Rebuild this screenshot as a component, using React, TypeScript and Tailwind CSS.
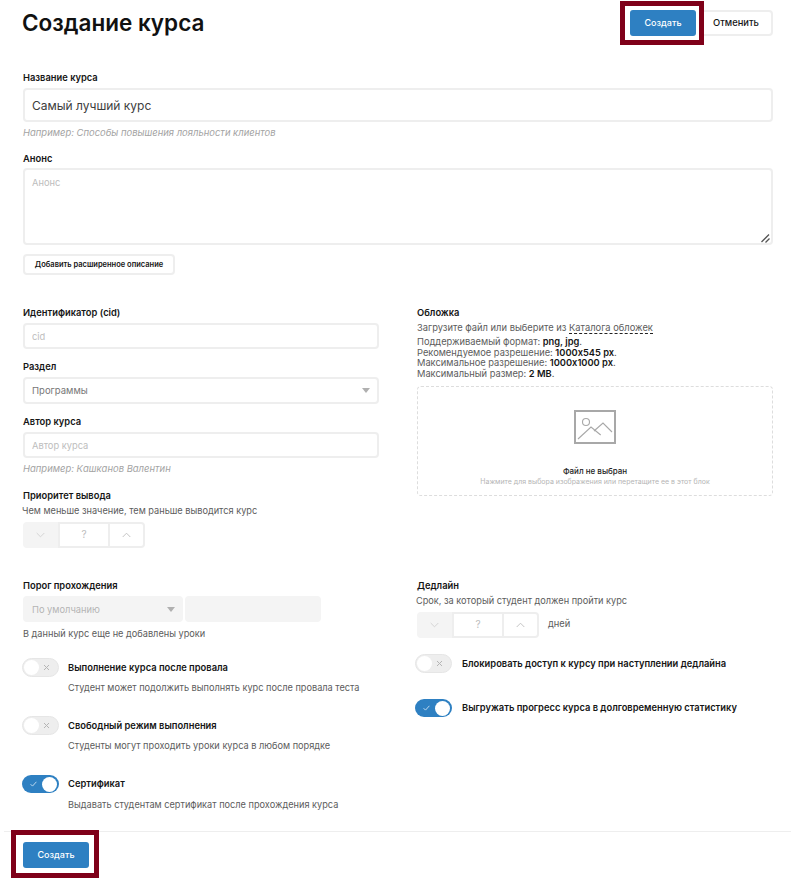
import React from 'react'

const fontStyle = "font-['Inter','Liberation_Sans',sans-serif]"

const Label = ({ children, className = '' }: { children: React.ReactNode; className?: string }) => (
    <p className={`translate-y-[1px] text-[9.35px] leading-[12px] font-semibold text-[#151515] ${className}`}>{children}</p>
)

const Hint = ({ children, className = '' }: { children: React.ReactNode; className?: string }) => (
    <p className={`translate-y-[1px] text-[9.45px] leading-[12px] italic text-[#a3a3a3] ${className}`}>{children}</p>
)

const Desc = ({ children, className = '' }: { children: React.ReactNode; className?: string }) => (
    <p className={`translate-y-[1px] text-[9.2px] leading-[12px] text-[#5c5c5c] ${className}`}>{children}</p>
)

const TextInput = ({ placeholder, className = '' }: { placeholder: string; className?: string }) => (
    <input
        type="text"
        placeholder={placeholder}
        className={`block w-full h-[26px] px-[7px] border-2 border-[#eeeeee] rounded-[4px] text-[9.3px] placeholder:text-[#bdbdbd] outline-none ${className}`}
    />
)

const Caret = () => (
    <span className="w-0 h-0 border-l-[4.5px] border-r-[4.5px] border-t-[5px] border-l-transparent border-r-transparent border-t-[#b0b0b0]" />
)

const Stepper = () => (
    <div className="flex w-[122px] h-[26px]">
        <div className="w-[35px] bg-[#f4f4f4] rounded-l-[4px] flex items-center justify-center">
            <svg width="9" height="6" viewBox="0 0 9 6" fill="none" stroke="#d4d4d4" strokeWidth="1"><path d="M.7 1l3.8 3.8L8.3 1" /></svg>
        </div>
        <div className="w-[52px] border-2 border-[#eeeeee] flex items-center justify-center text-[10px] text-[#bdbdbd] pb-[2px]">?</div>
        <div className="w-[35px] border-y-2 border-r-2 border-[#eeeeee] rounded-r-[4px] flex items-center justify-center">
            <svg width="9" height="6" viewBox="0 0 9 6" fill="none" stroke="#c4c4c4" strokeWidth="1"><path d="M.7 5l3.8-3.8L8.3 5" /></svg>
        </div>
    </div>
)

const Toggle = ({ on = false }: { on?: boolean }) =>
    on ? (
        <div className="w-[37px] h-[18px] shrink-0 rounded-full bg-[#2e80c2] flex items-center justify-between pl-[8px] pr-[2px]">
            <svg width="7" height="6" viewBox="0 0 7 6" fill="none" stroke="#bcd8ee" strokeWidth="1"><path d="M.6 3.2l1.9 1.9L6.4.8" /></svg>
            <span className="w-[15px] h-[15px] rounded-full bg-white" />
        </div>
    ) : (
        <div className="w-[37px] h-[19px] shrink-0 rounded-full bg-[#eeeeee] border border-[#e6e6e6] flex items-center justify-between pl-[1px] pr-[8px]">
            <span className="w-[15px] h-[15px] rounded-full bg-white" />
            <svg width="7" height="7" viewBox="0 0 7 7" fill="none" stroke="#b5b5b5" strokeWidth="1"><path d="M1 1l5 5M6 1L1 6" /></svg>
        </div>
    )

const ToggleRow = ({ on, title, text, className = '' }: { on?: boolean; title: string; text?: string; className?: string }) => (
    <div className={`flex -ml-[1px] ${className}`}>
        <Toggle on={on} />
        <div className={on ? 'pt-[2px]' : 'pt-[3px]'}>
            <Label>{title}</Label>
            {text && <Desc className={on ? 'mt-[9px]' : 'mt-[8px]'}>{text}</Desc>}
        </div>
    </div>
)

const CreateButton = () => (
    <button className="block w-[66px] h-[26px] rounded-[3px] bg-[#2e80c2] text-white text-[9px] font-medium">Создать</button>
)

const App = () => {
    return (
        <div className={`relative w-[791px] h-[878px] overflow-hidden bg-white text-[#151515] ${fontStyle}`}>
            <div className="pl-[23px] pr-[18px]">
                <div className="flex items-start justify-between pt-[10px] h-[71px]">
                    <h1 className="-ml-[1px] -mt-[2px] text-[22.5px] leading-[30px] font-semibold text-[#111111]">Создание курса</h1>
                    <div className="flex gap-[3px]">
                        <CreateButton />
                        <button className="w-[74px] h-[26px] rounded-[4px] border-2 border-[#eeeeee] text-[9.4px] font-medium">Отменить</button>
                    </div>
                </div>

                <Label>Название курса</Label>
                <input
                    type="text"
                    defaultValue="Самый лучший курс"
                    className="block w-full h-[34px] mt-[5px] px-[7px] border-2 border-[#eeeeee] rounded-[4px] text-[12px] text-[#3d3d3d] outline-none"
                />
                <Hint className="mt-[4px]">Например: Способы повышения лояльности клиентов</Hint>
                <Label className="mt-[14px]">Анонс</Label>
                <div className="relative mt-[4px]">
                    <textarea
                        placeholder="Анонс"
                        className="block w-full h-[77px] px-[7px] py-[6px] border-2 border-[#eeeeee] rounded-[4px] text-[9.3px] placeholder:text-[#bdbdbd] outline-none resize-none"
                    />
                    <svg className="absolute right-[3px] bottom-[2px]" width="9" height="9" viewBox="0 0 9 9" fill="none" stroke="#555555" strokeWidth="1.3">
                        <path d="M.5 8L8 .5M4.5 8.5L8.5 4.5" />
                    </svg>
                </div>
                <button className="block w-[152px] h-[21px] mt-[9px] border-2 border-[#eeeeee] rounded-[4px] text-[7.5px] font-semibold">Добавить расширенное описание</button>

                <div className="grid grid-cols-[356px_356px] gap-x-[38px] mt-[31px]">
                    <div>
                        <Label>Идентификатор (cid)</Label>
                        <TextInput placeholder="cid" className="mt-[5px]" />
                        <Label className="mt-[11px]">Раздел</Label>
                        <div className="flex items-center justify-between h-[27px] mt-[5px] px-[7px] border-2 border-[#eeeeee] rounded-[4px] text-[9.5px] text-[#777777]">
                            <span className="pt-[1px]">Программы</span>
                            <Caret />
                        </div>
                        <Label className="mt-[11px]">Автор курса</Label>
                        <TextInput placeholder="Автор курса" className="mt-[5px]" />
                        <Hint className="mt-[4px]">Например: Кашканов Валентин</Hint>
                        <Label className="mt-[15px]">Приоритет вывода</Label>
                        <Desc className="mt-[3px] -ml-[1px]">Чем меньше значение, тем раньше выводится курс</Desc>
                        <div className="mt-[6px]"><Stepper /></div>
                    </div>

                    <div>
                        <Label>Обложка</Label>
                        <p className="mt-[3px] translate-y-[1px] text-[9.35px] leading-[12px] text-[#5c5c5c]">
                            Загрузите файл или выберите из{' '}
                            <span className="border-b border-dashed border-[#222222]">Каталога обложек</span>
                        </p>
                        <div className="mt-[4px] text-[9.3px] leading-[10.7px] text-[#5c5c5c]">
                            <p>Поддерживаемый формат: <b className="font-semibold text-[#151515]">png, jpg</b>.</p>
                            <p>Рекомендуемое разрешение: <b className="font-semibold text-[#151515]">1000x545 px</b>.</p>
                            <p>Максимальное разрешение: <b className="font-semibold text-[#151515]">1000x1000 px</b>.</p>
                            <p>Максимальный размер: <b className="font-semibold text-[#151515]">2 MB</b>.</p>
                        </div>
                        <div className="flex flex-col items-center h-[110px] mt-[6px] pt-[23px] border border-dashed border-[#dddddd] rounded-[4px]">
                            <svg width="42" height="34" viewBox="0 0 42 34" fill="none" stroke="#a8a8a8" strokeWidth="1.1">
                                <rect x="1" y="1" width="40" height="32" strokeWidth="2" />
                                <circle cx="12" cy="12" r="3.5" />
                                <path d="M4 29L17 17l9.7 8M20 21l9-8 9 9" />
                            </svg>
                            <p className="mt-[22px] text-[8px] leading-[10px] font-medium text-[#222222]">Файл не выбран</p>
                            <p className="mt-[1px] text-[7px] leading-[10px] text-[#b5b5b5]">Нажмите для выбора изображения или перетащите ее в этот блок</p>
                        </div>
                    </div>
                </div>

                <div className="grid grid-cols-[356px_356px] gap-x-[38px] mt-[31px]">
                    <div>
                        <Label>Порог прохождения</Label>
                        <div className="flex gap-[2px] mt-[5px]">
                            <div className="flex items-center justify-between w-[160px] h-[26px] px-[9px] pr-[8px] rounded-[4px] bg-[#f4f4f4] text-[9.3px] text-[#b5b5b5]">
                                <span className="pt-[1px]">По умолчанию</span>
                                <Caret />
                            </div>
                            <div className="w-[136px] h-[26px] rounded-[4px] bg-[#f4f4f4]" />
                        </div>
                        <Desc className="mt-[5px]">В данный курс еще не добавлены уроки</Desc>
                        <ToggleRow className="mt-[19px] gap-[9px]" title="Выполнение курса после провала" text="Студент может подолжить выполнять курс после провала теста" />
                        <ToggleRow className="mt-[23px] gap-[9px]" title="Свободный режим выполнения" text="Студенты могут проходить уроки курса в любом порядке" />
                        <ToggleRow on className="mt-[24px] gap-[9px]" title="Сертификат" text="Выдавать студентам сертификат после прохождения курса" />
                    </div>

                    <div>
                        <Label>Дедлайн</Label>
                        <Desc className="mt-[3px] -ml-[1px]">Срок, за который студент должен пройти курс</Desc>
                        <div className="flex items-center gap-[9px] mt-[6px]">
                            <Stepper />
                            <span className="text-[9.3px] text-[#5c5c5c] pb-[2px]">дней</span>
                        </div>
                        <div className="mt-[16px] -ml-[1px]"><ToggleRow className="gap-[10px]" title="Блокировать доступ к курсу при наступлении дедлайна" /></div>
                        <div className="mt-[26px] -ml-[1px]"><ToggleRow on className="gap-[10px]" title="Выгружать прогресс курса в долговременную статистику" /></div>
                    </div>
                </div>
            </div>

            <div className="mt-[21px] ml-[4px] pl-[19px] pt-[10px] border-t border-[#eeeeee]">
                <CreateButton />
            </div>

            {/* red annotation frames */}
            <div className="absolute left-[620px] top-[1px] w-[84px] h-[44px] border-[5px] border-[#7f0019]" />
            <div className="absolute left-[11px] top-[830px] w-[88px] h-[48px] border-[5px] border-[#7f0019]" />
        </div>
    )
}

export default App
